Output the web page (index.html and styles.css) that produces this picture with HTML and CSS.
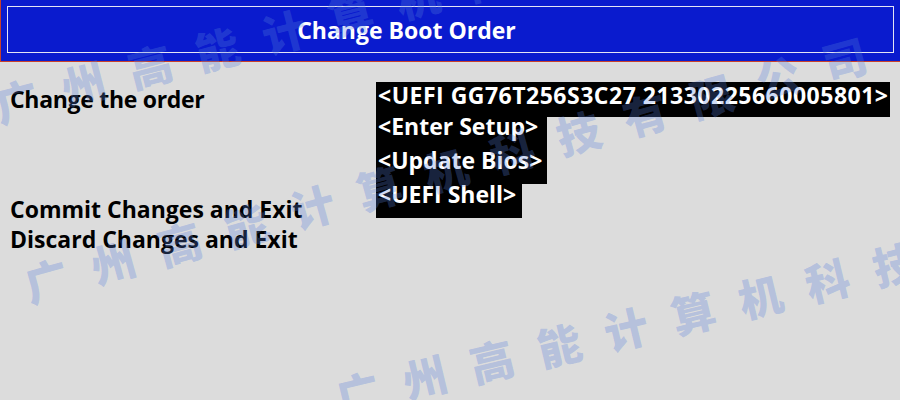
FILE: index.html
```html
<!DOCTYPE html>
<html>
<head>
    <title>Change Boot Order</title>
    <link rel="stylesheet" href="styles.css">
</head>
<body>
<div id="screen">
    <div id="titleBar">
        <div id="titleFrame">
            <span id="titleText">Change Boot Order</span>
        </div>
    </div>

    <div id="content">
        <div id="leftColumn">
            <div class="label">Change the order</div>
            <div id="actions">
                <div class="action">Commit Changes and Exit</div>
                <div class="action">Discard Changes and Exit</div>
            </div>
        </div>

        <div id="bootList">
            <div class="bootItem first">&lt;UEFI GG76T256S3C27 21330225660005801&gt;</div>
            <div class="bootGroup">
                <div class="bootItem second">&lt;Enter Setup&gt;</div>
                <div class="bootItem third">&lt;Update Bios&gt;</div>
            </div>
            <div class="bootItem last">&lt;UEFI Shell&gt;</div>
        </div>
    </div>

    <!-- watermark lies over the whole screen -->
    <div id="watermark">
        <div class="wmRow row1">广州高能计算机科技有限公司</div>
        <div class="wmRow row2">广州高能计算机科技有限公司</div>
        <div class="wmRow row3">广州高能计算机科技有限公司</div>
    </div>
</div>
</body>
</html>
```

FILE: styles.css
```css
body {
    margin: 0;
    background: #dcdcdc;
    font-family: "Open Sans", "Noto Sans", sans-serif;
    font-weight: 700;
    font-size: 23px;
}
#screen {
    position: relative;
    width: 900px;
    height: 400px;
    overflow: hidden;
}
#titleBar {
    height: 62px;
    background: #0a1bce;
    border-left: 1px solid #c8402c;
    border-bottom: 1px solid #c8402c;
    padding: 6px 6px 0 6px;
    box-sizing: border-box;
}
#titleFrame {
    height: 47px;
    border: 1px solid #e4e4f4;
    box-sizing: border-box;
    display: flex;
    align-items: center;
    justify-content: center;
    padding-right: 88px;
}
#titleText {
    color: #fff;
    line-height: 18px;
}
#content {
    display: grid;
    grid-template-columns: 376px 1fr;
    padding-top: 20px;
}
#leftColumn {
    padding: 8px 0 0 10px;
}
.label {
    line-height: 18px;
    letter-spacing: -0.3px;
}
#actions {
    margin-top: 86px;
}
.action {
    line-height: 30px;
}
#bootList {
    display: flex;
    flex-direction: column;
    align-items: flex-start;
}
.bootItem {
    background: #000;
    color: #fff;
    line-height: 18px;
    padding-left: 2px;
}
.bootItem.first {
    padding: 4px 2px 13px 2px;
    letter-spacing: 0.5px;
}
.bootGroup {
    background: #000;
    width: 171px;
}
.bootItem.second {
    padding-bottom: 8px;
}
.bootItem.third {
    padding: 8px 0 15px 2px;
}
.bootItem.last {
    padding: 1px 6px 15px 2px;
}
#watermark {
    position: absolute;
    inset: 0;
    pointer-events: none;
}
.wmRow {
    position: absolute;
    font-family: "Noto Sans CJK SC", sans-serif;
    font-weight: 900;
    font-size: 44px;
    line-height: 44px;
    letter-spacing: 25px;
    white-space: nowrap;
    color: rgba(87, 127, 220, 0.3);
    transform-origin: 0 50%;
}
.row1 {
    left: -5px;
    top: 83px;
    transform: rotate(-14.5deg);
}
.row2 {
    left: 25px;
    top: 263px;
    transform: rotate(-15.5deg);
}
.row3 {
    left: 336px;
    top: 375px;
    transform: rotate(-13.5deg);
}
```
